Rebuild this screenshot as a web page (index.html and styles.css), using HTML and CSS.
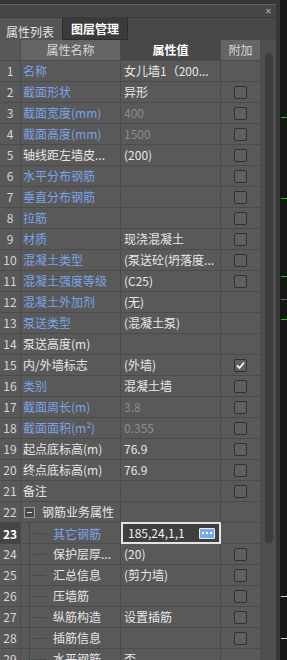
FILE: index.html
```html
<!DOCTYPE html>
<html lang="zh-CN">
<head>
    <meta charset="UTF-8">
    <title>属性列表</title>
    <link rel="stylesheet" href="styles.css">
</head>
<body>
<div class="app">
    <div class="panel">
        <div class="topstrip"></div>
        <div class="titlebar"><span class="close">&#10005;</span></div>
        <div class="tabs">
            <div class="tab active">属性列表</div>
            <div class="tab other">图层管理</div>
        </div>
        <div class="grid-wrap">
            <div class="table">
                <div class="row head">
                    <div class="c num"></div>
                    <div class="c name">属性名称</div>
                    <div class="c val">属性值</div>
                    <div class="c add">附加</div>
                </div>

                <div class="row"><div class="c num">1</div><div class="c name blue">名称</div><div class="c val">女儿墙1（200...</div><div class="c add"></div></div>
                <div class="row"><div class="c num">2</div><div class="c name blue">截面形状</div><div class="c val">异形</div><div class="c add"><span class="cb"></span></div></div>
                <div class="row"><div class="c num">3</div><div class="c name blue">截面宽度(mm)</div><div class="c val dim">400</div><div class="c add"><span class="cb"></span></div></div>
                <div class="row"><div class="c num">4</div><div class="c name blue">截面高度(mm)</div><div class="c val dim">1500</div><div class="c add"><span class="cb"></span></div></div>
                <div class="row"><div class="c num">5</div><div class="c name">轴线距左墙皮...</div><div class="c val">(200)</div><div class="c add"><span class="cb"></span></div></div>
                <div class="row"><div class="c num">6</div><div class="c name blue">水平分布钢筋</div><div class="c val"></div><div class="c add"><span class="cb"></span></div></div>
                <div class="row"><div class="c num">7</div><div class="c name blue">垂直分布钢筋</div><div class="c val"></div><div class="c add"><span class="cb"></span></div></div>
                <div class="row"><div class="c num">8</div><div class="c name blue">拉筋</div><div class="c val"></div><div class="c add"><span class="cb"></span></div></div>
                <div class="row"><div class="c num">9</div><div class="c name blue">材质</div><div class="c val">现浇混凝土</div><div class="c add"><span class="cb"></span></div></div>
                <div class="row"><div class="c num">10</div><div class="c name blue">混凝土类型</div><div class="c val">(泵送砼(坍落度...</div><div class="c add"><span class="cb"></span></div></div>
                <div class="row"><div class="c num">11</div><div class="c name blue">混凝土强度等级</div><div class="c val">(C25)</div><div class="c add"><span class="cb"></span></div></div>
                <div class="row"><div class="c num">12</div><div class="c name blue">混凝土外加剂</div><div class="c val">(无)</div><div class="c add"></div></div>
                <div class="row"><div class="c num">13</div><div class="c name blue">泵送类型</div><div class="c val">(混凝土泵)</div><div class="c add"></div></div>
                <div class="row"><div class="c num">14</div><div class="c name">泵送高度(m)</div><div class="c val"></div><div class="c add"></div></div>
                <div class="row"><div class="c num">15</div><div class="c name">内/外墙标志</div><div class="c val">(外墙)</div><div class="c add"><span class="cb checked"><svg width="11" height="11" viewBox="0 0 11 11"><polyline points="2,5.5 4.5,8 9,2.5" fill="none" stroke="#f2f2f2" stroke-width="1.8"/></svg></span></div></div>
                <div class="row"><div class="c num">16</div><div class="c name blue">类别</div><div class="c val">混凝土墙</div><div class="c add"><span class="cb"></span></div></div>
                <div class="row"><div class="c num">17</div><div class="c name blue">截面周长(m)</div><div class="c val dim">3.8</div><div class="c add"><span class="cb"></span></div></div>
                <div class="row"><div class="c num">18</div><div class="c name blue">截面面积(m²)</div><div class="c val dim">0.355</div><div class="c add"><span class="cb"></span></div></div>
                <div class="row"><div class="c num">19</div><div class="c name">起点底标高(m)</div><div class="c val">76.9</div><div class="c add"><span class="cb"></span></div></div>
                <div class="row"><div class="c num">20</div><div class="c name">终点底标高(m)</div><div class="c val">76.9</div><div class="c add"><span class="cb"></span></div></div>
                <div class="row"><div class="c num">21</div><div class="c name">备注</div><div class="c val"></div><div class="c add"><span class="cb"></span></div></div>
                <div class="row"><div class="c num">22</div><div class="c name group"><span class="minus"></span>钢筋业务属性</div><div class="c val"></div><div class="c add"></div></div>
                <div class="row current"><div class="c num">23</div><div class="c name blue"><i class="branch"></i>其它钢筋</div><div class="c val edit"><span>185,24,1,1</span><span class="more"><b></b><b></b><b></b></span></div><div class="c add"></div></div>
                <div class="row"><div class="c num">24</div><div class="c name"><i class="branch"></i>保护层厚...</div><div class="c val">(20)</div><div class="c add"><span class="cb"></span></div></div>
                <div class="row"><div class="c num">25</div><div class="c name"><i class="branch"></i>汇总信息</div><div class="c val">(剪力墙)</div><div class="c add"><span class="cb"></span></div></div>
                <div class="row"><div class="c num">26</div><div class="c name"><i class="branch"></i>压墙筋</div><div class="c val"></div><div class="c add"><span class="cb"></span></div></div>
                <div class="row"><div class="c num">27</div><div class="c name"><i class="branch"></i>纵筋构造</div><div class="c val">设置插筋</div><div class="c add"><span class="cb"></span></div></div>
                <div class="row"><div class="c num">28</div><div class="c name"><i class="branch"></i>插筋信息</div><div class="c val"></div><div class="c add"><span class="cb"></span></div></div>
                <div class="row"><div class="c num">29</div><div class="c name"><i class="branch"></i>水平钢筋</div><div class="c val">否</div><div class="c add"></div></div>
            </div>
            <div class="scroll"><div class="thumb"></div></div>
        </div>
    </div>
    <div class="viewport">
        <div class="line green" style="top:117px"></div>
        <div class="line green" style="top:198px"></div>
        <div class="line green" style="top:276px"></div>
        <div class="line grey" style="top:299px"></div>
        <div class="line green" style="top:319px"></div>
        <div class="line white" style="top:596px"></div>
        <div class="line white" style="top:638px"></div>
    </div>
</div>
</body>
</html>
```

FILE: styles.css
```css
body {
    margin: 0;
    background: #161616;
    font-family: "Noto Sans CJK SC", "Noto Sans", sans-serif;
    font-size: 12px;
    color: #e6e6e6;
    overflow: hidden;
}
.app {
    display: flex;
    height: 660px;
}
.panel {
    width: 276px;
    flex-shrink: 0;
    background: #595959;
    display: flex;
    flex-direction: column;
    overflow: hidden;
}
.topstrip {
    height: 4px;
    background: #353535;
    border-bottom: 1px solid #5e5e5e;
}
.titlebar {
    height: 12px;
    background: #464646;
    display: flex;
    justify-content: flex-end;
    align-items: center;
    padding-right: 4px;
}
.close {
    font-size: 8px;
    color: #b5b5b5;
    line-height: 1;
}
.tabs {
    height: 23px;
    display: flex;
    background: #474747;
    border-top: 1px solid #3a3a3a;
    box-sizing: border-box;
}
.tab {
    line-height: 1;
    display: flex;
    align-items: center;
}
.tab.active {
    width: 62px;
    background: #555555;
    color: #e3e3e3;
    padding-left: 6px;
    padding-top: 6px;
    box-sizing: border-box;
}
.tab.other {
    width: 66px;
    background: #3b3b3b;
    border: 1px solid #2d2d2d;
    border-top: 0;
    box-sizing: border-box;
    justify-content: center;
    color: #ffffff;
    font-weight: bold;
}
.grid-wrap {
    flex: 1;
    display: flex;
    overflow: hidden;
}
.table {
    width: 261px;
}
.row {
    display: grid;
    grid-template-columns: 21px 100px 100px 40px;
    height: 21px;
    border-bottom: 1px solid #4b4b4b;
    box-sizing: border-box;
}
.c {
    border-right: 1px solid #4b4b4b;
    display: flex;
    align-items: center;
    white-space: nowrap;
    overflow: hidden;
    line-height: 1;
}
.num {
    justify-content: center;
    color: #d6d6d6;
    font-size: 12px;
}
.name {
    padding-left: 2px;
    color: #e6e6e6;
}
.name.blue {
    color: #7ca3e6;
}
.val {
    padding-left: 3px;
    color: #e8e8e8;
}
.val.dim {
    color: #8c8c8c;
}
.add {
    justify-content: center;
}
.head .num {
    background: #585858;
}
.head .name {
    background: #656565;
    justify-content: center;
    color: #d8d8d8;
    padding: 0;
}
.head .val {
    background: #474747;
    justify-content: center;
    color: #ffffff;
    font-weight: bold;
    padding: 0;
}
.head .add {
    background: #656565;
    color: #d8d8d8;
}
.cb {
    width: 13px;
    height: 13px;
    box-sizing: border-box;
    border: 1px solid #303030;
    border-radius: 2px;
    background: #5f5f5f;
    display: flex;
    align-items: center;
    justify-content: center;
}
.cb svg {
    display: block;
}
.group .minus {
    width: 11px;
    height: 11px;
    box-sizing: border-box;
    border: 1px solid #9a9a9a;
    background: #4a4a4a;
    margin: 0 7px 0 1px;
    display: flex;
    align-items: center;
    justify-content: center;
}
.group .minus::after {
    content: "";
    width: 5px;
    height: 1px;
    background: #e0e0e0;
}
.branch {
    width: 22px;
    height: 21px;
    margin-left: 6px;
    margin-right: 1px;
    border-left: 1px solid #474747;
    flex-shrink: 0;
    background: linear-gradient(#484848, #484848) no-repeat 1px 50% / 15px 1px;
}
.current .num {
    background: #454545;
    color: #ffffff;
    font-weight: bold;
}
.val.edit {
    border: 2px solid #e4e4e4;
    background: #3f3f3f;
    padding-left: 5px;
    justify-content: space-between;
    padding-right: 4px;
    color: #f0f0f0;
    margin-top: -1px;
    height: 22px;
    box-sizing: border-box;
}
.more {
    width: 16px;
    height: 11px;
    box-sizing: border-box;
    border: 1px solid #e8f0fa;
    background: #7aaae9;
    border-radius: 1px;
    display: flex;
    align-items: center;
    justify-content: center;
    gap: 2px;
}
.more b {
    width: 2px;
    height: 2px;
    background: #ffffff;
}
.scroll {
    width: 15px;
    background: #4f4f4f;
    padding-top: 13px;
    box-sizing: border-box;
}
.thumb {
    width: 8px;
    height: 490px;
    margin-left: 4px;
    background: #3d3d3d;
    border-radius: 4px;
}
.viewport {
    flex: 1;
    position: relative;
    background: #161616;
    border-left: 4px solid #383838;
}
.line {
    position: absolute;
    left: 1px;
    right: 0;
    height: 1px;
}
.green {
    background: #22c322;
}
.grey {
    background: #6a6a6a;
}
.white {
    background: #d8d8d8;
}
```
